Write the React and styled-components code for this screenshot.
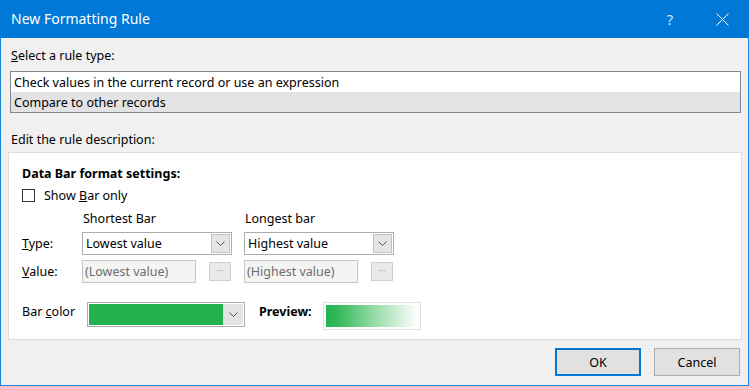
import React from 'react';
import styled, { createGlobalStyle } from 'styled-components';

const Global = createGlobalStyle`
  body {
    margin: 0;
    font-family: "Noto Sans", "Open Sans", sans-serif;
    font-size: 12.5px;
    color: #000;
  }
`;

const Chevron = () => (
  <svg width="9" height="5" viewBox="0 0 9 5">
    <polyline points="0.5,0.5 4.5,4.5 8.5,0.5" fill="none" stroke="#555" strokeWidth="1" />
  </svg>
);

const App = () => {
  return (
    <Window>
      <Global />
      <TitleBar>
        <Title>New Formatting Rule</Title>
        <TitleButton>?</TitleButton>
        <TitleButton>
          <svg width="13" height="13" viewBox="0 0 13 13">
            <path d="M0.5 0.5 L12.5 12.5 M12.5 0.5 L0.5 12.5" stroke="#fff" strokeWidth="1" />
          </svg>
        </TitleButton>
      </TitleBar>
      <Body>
        <Label><u>S</u>elect a rule type:</Label>
        <ListBox>
          <ListItem>Check values in the current record or use an expression</ListItem>
          <ListItem selected>Compare to other records</ListItem>
        </ListBox>
        <SectionLabel>Edit the rule description:</SectionLabel>
        <Panel>
          <Heading>Data Bar format settings:</Heading>
          <CheckRow>
            <CheckBox />
            <span>Show <u>B</u>ar only</span>
          </CheckRow>
          <Grid>
            <span />
            <ColumnHead>Shortest Bar</ColumnHead>
            <ColumnHead>Longest bar</ColumnHead>
            <RowLabel><u>T</u>ype:</RowLabel>
            <Combo>
              <ComboText>Lowest value</ComboText>
              <DropButton><Chevron /></DropButton>
            </Combo>
            <Combo>
              <ComboText>Highest value</ComboText>
              <DropButton><Chevron /></DropButton>
            </Combo>
            <RowLabel><u>V</u>alue:</RowLabel>
            <ValueCell>
              <TextBox>(Lowest value)</TextBox>
              <DotsButton>···</DotsButton>
            </ValueCell>
            <ValueCell>
              <TextBox>(Highest value)</TextBox>
              <DotsButton>···</DotsButton>
            </ValueCell>
          </Grid>
          <ColorRow>
            <BarLabel>Bar <u>c</u>olor</BarLabel>
            <ColorCombo>
              <Swatch />
              <ColorDrop><Chevron /></ColorDrop>
            </ColorCombo>
            <PreviewLabel>Preview:</PreviewLabel>
            <PreviewBox>
              <PreviewBar />
            </PreviewBox>
          </ColorRow>
        </Panel>
        <Footer>
          <Button primary>OK</Button>
          <Button>Cancel</Button>
        </Footer>
      </Body>
    </Window>
  );
};

export default App;

const Window = styled.div`
  width: 749px;
  height: 386px;
  display: flex;
  flex-direction: column;
  background: #f0f0f0;
`;
const TitleBar = styled.div`
  height: 38px;
  flex: none;
  background: #0078d7;
  color: #fff;
  display: flex;
  align-items: center;
  padding-left: 11px;
`;
const Title = styled.div`
  flex: 1;
  font-size: 14px;
  margin-top: -1px;
`;
const TitleButton = styled.div`
  width: 58px;
  height: 38px;
  display: flex;
  align-items: center;
  justify-content: center;
  font-size: 15px;
  color: #cfe3f7;
  &:last-child {
    width: 46px;
    margin-right: 4px;
  }
`;
const Body = styled.div`
  flex: 1;
  display: flex;
  flex-direction: column;
  border: 1px solid #1a86d9;
  border-top: none;
  padding: 10px 6px 0 7px;
`;
const Label = styled.div`
  line-height: 16px;
  padding-left: 3px;
  color: #000;
`;
const ListBox = styled.div`
  margin: 7px 1px 0 2px;
  border: 1px solid #828790;
  background: #fff;
`;
const ListItem = styled.div`
  height: 20px;
  line-height: 21px;
  padding-left: 3px;
  background: ${(p) => (p.selected ? '#e3e3e6' : '#fff')};
`;
const SectionLabel = styled(Label)`
  margin-top: 19px;
`;
const Panel = styled.div`
  margin-top: 4px;
  height: 188px;
  box-sizing: border-box;
  border: 1px solid #dcdcdc;
  background: #fff;
  padding: 13px 0 0 13px;
  display: flex;
  flex-direction: column;
`;
const Heading = styled.div`
  font-weight: bold;
  line-height: 16px;
`;
const CheckRow = styled.div`
  display: flex;
  align-items: center;
  gap: 9px;
  margin-top: 5px;
  height: 16px;
`;
const CheckBox = styled.div`
  width: 11px;
  height: 11px;
  border: 1px solid #333;
  background: #fff;
`;
const Grid = styled.div`
  display: grid;
  grid-template-columns: 48px 150px 150px;
  grid-template-rows: 16px 23px 23px;
  column-gap: 12px;
  row-gap: 5px;
  margin-top: 8px;
  align-items: center;
`;
const ColumnHead = styled.div`
  padding-left: 1px;
  line-height: 16px;
`;
const RowLabel = styled.div`
  line-height: 16px;
`;
const Combo = styled.div`
  height: 23px;
  box-sizing: border-box;
  border: 1px solid #adadad;
  display: flex;
  align-items: center;
  padding: 0 1px 0 3px;
`;
const ComboText = styled.div`
  flex: 1;
`;
const DropButton = styled.div`
  width: 19px;
  height: 19px;
  box-sizing: border-box;
  background: #e5e5e5;
  border: 1px solid #c2c2c2;
  display: flex;
  align-items: center;
  justify-content: center;
`;
const ValueCell = styled.div`
  display: flex;
  align-items: center;
  justify-content: space-between;
  padding-right: 1px;
`;
const TextBox = styled.div`
  width: 114px;
  height: 23px;
  box-sizing: border-box;
  border: 1px solid #c6c6c6;
  background: #f4f4f4;
  color: #6d6d6d;
  line-height: 21px;
  padding-left: 2px;
`;
const DotsButton = styled.div`
  width: 22px;
  height: 19px;
  box-sizing: border-box;
  background: #eaeaea;
  border: 1px solid #cfcfcf;
  color: #9a9a9a;
  font-size: 9px;
  line-height: 16px;
  text-align: center;
`;
const ColorRow = styled.div`
  display: flex;
  align-items: center;
  margin-top: 16px;
`;
const BarLabel = styled.div`
  width: 65px;
  margin-top: -6px;
`;
const ColorCombo = styled.div`
  width: 158px;
  height: 25px;
  box-sizing: border-box;
  border: 1px solid #adadad;
  padding: 1px;
  display: flex;
`;
const Swatch = styled.div`
  flex: 1;
  background: #22b14c;
`;
const ColorDrop = styled.div`
  width: 20px;
  background: #e3e3e3;
  display: flex;
  align-items: center;
  justify-content: center;
`;
const PreviewLabel = styled.div`
  font-weight: bold;
  margin-left: 14px;
  width: 64px;
  margin-top: -6px;
`;
const PreviewBox = styled.div`
  width: 98px;
  height: 28px;
  box-sizing: border-box;
  border: 1px solid #e0e0e0;
  padding: 2px;
  margin-top: 3px;
  display: flex;
`;
const PreviewBar = styled.div`
  flex: 1;
  background: linear-gradient(to right, #22b14c 0%, #33b85a 12%, #8fd9a2 50%, #ffffff 100%);
`;
const Footer = styled.div`
  display: flex;
  justify-content: flex-end;
  gap: 13px;
  margin-top: 8px;
  padding-right: 2px;
`;
const Button = styled.div`
  width: 86px;
  height: 28px;
  box-sizing: border-box;
  background: #e1e1e1;
  border: ${(p) => (p.primary ? '2px solid #0078d7' : '1px solid #adadad')};
  display: flex;
  align-items: center;
  justify-content: center;
`;
